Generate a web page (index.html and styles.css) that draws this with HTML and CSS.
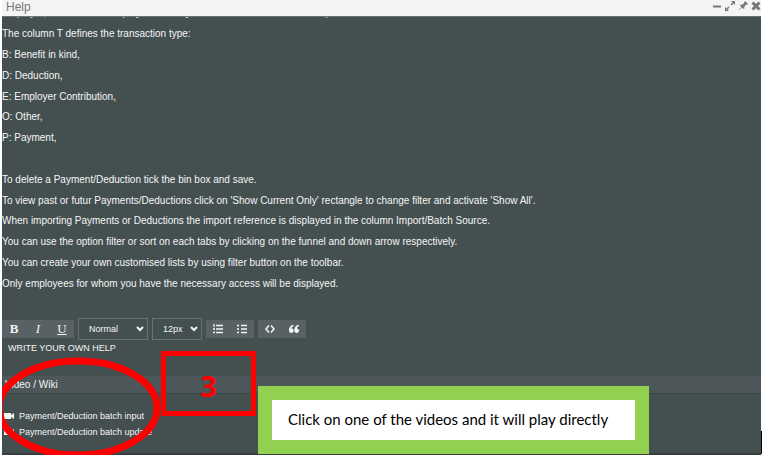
FILE: index.html
```html
<!DOCTYPE html>
<html lang="en">
<head>
<meta charset="utf-8">
<title>Help</title>
<link rel="stylesheet" href="styles.css">
</head>
<body>
<div class="window">
  <header class="titlebar">
    <h1 class="title">Help</h1>
    <div class="window-actions">
      <button type="button" aria-label="Minimise"><svg viewBox="0 0 10 10"><path d="M1 5.500h8" stroke-width="2"/></svg></button>
      <button type="button" aria-label="Maximise"><svg viewBox="0 0 10 10"><path d="M2 8l2-2M6 4l2-2" stroke-width="1.500"/><path d="M0 6v4h4zM6 0h4v4z" class="solid"/></svg></button>
      <button type="button" aria-label="Pin"><svg viewBox="0 0 10 10"><path d="M7 0l3 3-1 .8-.8-.2L6.300 5.600l.1 1.600-.9.800-1.500-1.500L0 10l3.400-4L2 4.500l.8-.9 1.600.1L6.400 1.800 6.200 1z" class="solid"/></svg></button>
      <button type="button" aria-label="Close"><svg viewBox="0 0 10 10"><path d="M1.500 1.500l7 7M8.500 1.500l-7 7" stroke-width="3"/></svg></button>
    </div>
  </header>
  <main class="content">
    <article class="help-text">
      <p class="scrolled">Employer, Deduction or employee and any transactions to be included in period.</p>
      <p>The column T defines the transaction type:</p>
      <p>B: Benefit in kind,</p>
      <p>D: Deduction,</p>
      <p>E: Employer Contribution,</p>
      <p>O: Other,</p>
      <p>P: Payment,</p>
      <p>&nbsp;</p>
      <p>To delete a Payment/Deduction tick the bin box and save.</p>
      <p>To view past or futur Payments/Deductions click on 'Show Current Only' rectangle to change filter and activate 'Show All'.</p>
      <p>When importing Payments or Deductions the import reference is displayed in the column Import/Batch Source.</p>
      <p>You can use the option filter or sort on each tabs by clicking on the funnel and down arrow respectively.</p>
      <p>You can create your own customised lists by using filter button on the toolbar.</p>
      <p>Only employees for whom you have the necessary access will be displayed.</p>
    </article>
    <div class="toolbar">
      <div class="group">
        <button type="button" class="bold">B</button>
        <button type="button" class="italic">I</button>
        <button type="button" class="underline">U</button>
      </div>
      <div class="picker style-picker">
        <select aria-label="Text style"><option>Normal</option></select>
        <svg viewBox="0 0 8 6"><path d="M1 1l3 3 3-3" stroke-width="2"/></svg>
      </div>
      <div class="picker size-picker">
        <select aria-label="Font size"><option>12px</option></select>
        <svg viewBox="0 0 8 6"><path d="M1 1l3 3 3-3" stroke-width="2"/></svg>
      </div>
      <div class="group">
        <button type="button" aria-label="Numbered list"><svg viewBox="0 0 10 10"><path d="M3 1.500h7M3 5h7M3 8.500h7M1 0v3M0 5h2M0 8.500h2" stroke-width="1.300"/></svg></button>
        <button type="button" aria-label="Bulleted list"><svg viewBox="0 0 10 10"><path d="M4 1.500h6M4 5h6M4 8.500h6M0 1.500h2M0 5h2M0 8.500h2" stroke-width="1.300"/></svg></button>
      </div>
      <div class="group">
        <button type="button" aria-label="Code"><svg viewBox="0 0 10 10"><path d="M4 1.500L1 5l3 3.500M6 1.500L9 5 6 8.500" stroke-width="1.500"/></svg></button>
        <button type="button" aria-label="Quote"><svg viewBox="0 0 10 10"><path d="M4.500 1C2 1 0 3 0 6.500 0 8 1 9 2.400 9s2.300-1 2.300-2.200S3.800 4.600 2.600 4.600C2.600 3.500 3.500 2.500 4.500 2.300zM9.800 1C7.300 1 5.300 3 5.300 6.500 5.300 8 6.300 9 7.700 9S10 8 10 6.800 9.100 4.600 7.900 4.600c0-1.100.9-2.100 1.900-2.300z" class="solid"/></svg></button>
      </div>
    </div>
    <p class="own-help">WRITE YOUR OWN HELP</p>
    <h2 class="section-title">Video / Wiki</h2>
    <ul class="videos">
      <li><a href="#input"><svg viewBox="0 0 10 8"><path d="M0 1h7v2l3-2v6L7 5v2H0z" class="solid"/></svg>Payment/Deduction batch input</a></li>
      <li><a href="#update"><svg viewBox="0 0 10 8"><path d="M0 1h7v2l3-2v6L7 5v2H0z" class="solid"/></svg>Payment/Deduction batch update</a></li>
    </ul>
  </main>
  <svg class="ring" viewBox="2 0 162 98"><ellipse cx="78" cy="51" rx="79" ry="47"/></svg>
  <div class="step">3</div>
  <div class="callout"><p>Click on one of the videos and it will play directly</p></div>
  <div class="caret"></div>
</div>
</body>
</html>
```
FILE: styles.css
```css
* { box-sizing: border-box; }
body { margin: 0; background: #fff; }
h1, h2, p, ul { margin: 0; padding: 0; font-weight: normal; }
button { border: 0; padding: 0; background: none; color: inherit; }
svg { fill: none; stroke: currentColor; }
.solid { fill: currentColor; stroke: none; }
.window {
  position: relative;
  display: flex;
  flex-direction: column;
  height: 100vh;
  padding: 0 4px 2px 2px;
  overflow: hidden;
  font-family: "Liberation Sans", Arial, sans-serif;
  font-size: 10px;
  color: #f4f6f6;
}
.titlebar {
  flex: none;
  display: flex;
  justify-content: space-between;
  height: 16px;
  padding-left: 4px;
  background: #f4f4f4;
  color: #777;
}
.title { font-size: 12px; line-height: 14px; }
.window-actions { display: flex; gap: 3px; height: 12px; align-items: center; }
.window-actions button { display: flex; }
.window-actions svg { width: 10px; height: 10px; }
.content {
  flex: 1;
  min-height: 0;
  display: flex;
  flex-direction: column;
  background: #444f50;
  border-top: 1px solid #6b7475;
  border-bottom: 2px solid #373f41;
}
.help-text {
  flex: 1;
  min-height: 0;
  display: grid;
  grid-template-rows: 7px;
  grid-auto-rows: 1fr;
  align-items: center;
  padding-bottom: 24px;
}
.help-text p { line-height: 20px; white-space: nowrap; }
.help-text .scrolled {
  display: flex;
  align-items: flex-end;
  align-self: start;
  height: 6px;
  overflow: hidden;
}
.toolbar { flex: none; display: flex; align-items: center; gap: 4px; height: 22px; }
.group { display: flex; height: 18px; background: #586163; }
.group button { display: flex; align-items: center; justify-content: center; width: 24px; }
.group svg { width: 10px; height: 10px; }
.bold, .italic, .underline { font-family: "Liberation Serif", serif; font-size: 13px; }
.bold { font-weight: bold; }
.italic { font-style: italic; }
.underline { text-decoration: underline; }
.picker { position: relative; height: 22px; border: 1px solid #687173; }
.picker select {
  appearance: none;
  width: 100%;
  height: 100%;
  padding: 0 10px;
  border: 0;
  background: transparent;
  color: inherit;
  font: 9px "Liberation Sans", Arial, sans-serif;
}
.picker svg { position: absolute; right: 3px; top: 7px; width: 8px; height: 6px; pointer-events: none; }
.style-picker { width: 70px; }
.size-picker { width: 50px; }
.own-help { flex: none; height: 36px; padding-left: 6px; line-height: 16px; font-size: 9px; }
.section-title {
  flex: none;
  height: 18px;
  padding-left: 3px;
  line-height: 18px;
  font-size: 10px;
  background: #4d5658;
  border-bottom: 1px solid #394244;
}
.videos { flex: none; height: 59px; padding: 14px 0 0 2px; list-style: none; font-size: 9px; line-height: 16px; }
.videos a { display: flex; align-items: center; gap: 5px; color: inherit; text-decoration: none; }
.videos svg { width: 10px; height: 8px; }
.ring { position: absolute; left: 2px; top: 357px; width: 162px; height: 98px; stroke: #f00; stroke-width: 7px; }
.step {
  position: absolute;
  left: 161px;
  top: 351px;
  width: 95px;
  height: 65px;
  border: 5px solid #f00;
  color: #f00;
  font: bold 29px/60px "Open Sans", sans-serif;
  text-align: center;
}
.callout {
  position: absolute;
  left: 258px;
  top: 386px;
  width: 391px;
  padding: 14px;
  background: #92d050;
}
.callout p { padding-left: 16px; background: #fff; color: #000; font: 15px/38px Lato, sans-serif; padding-bottom: 2px; }
.caret { position: absolute; right: 3px; bottom: 3px; width: 1px; height: 23px; background: #000; }
```
